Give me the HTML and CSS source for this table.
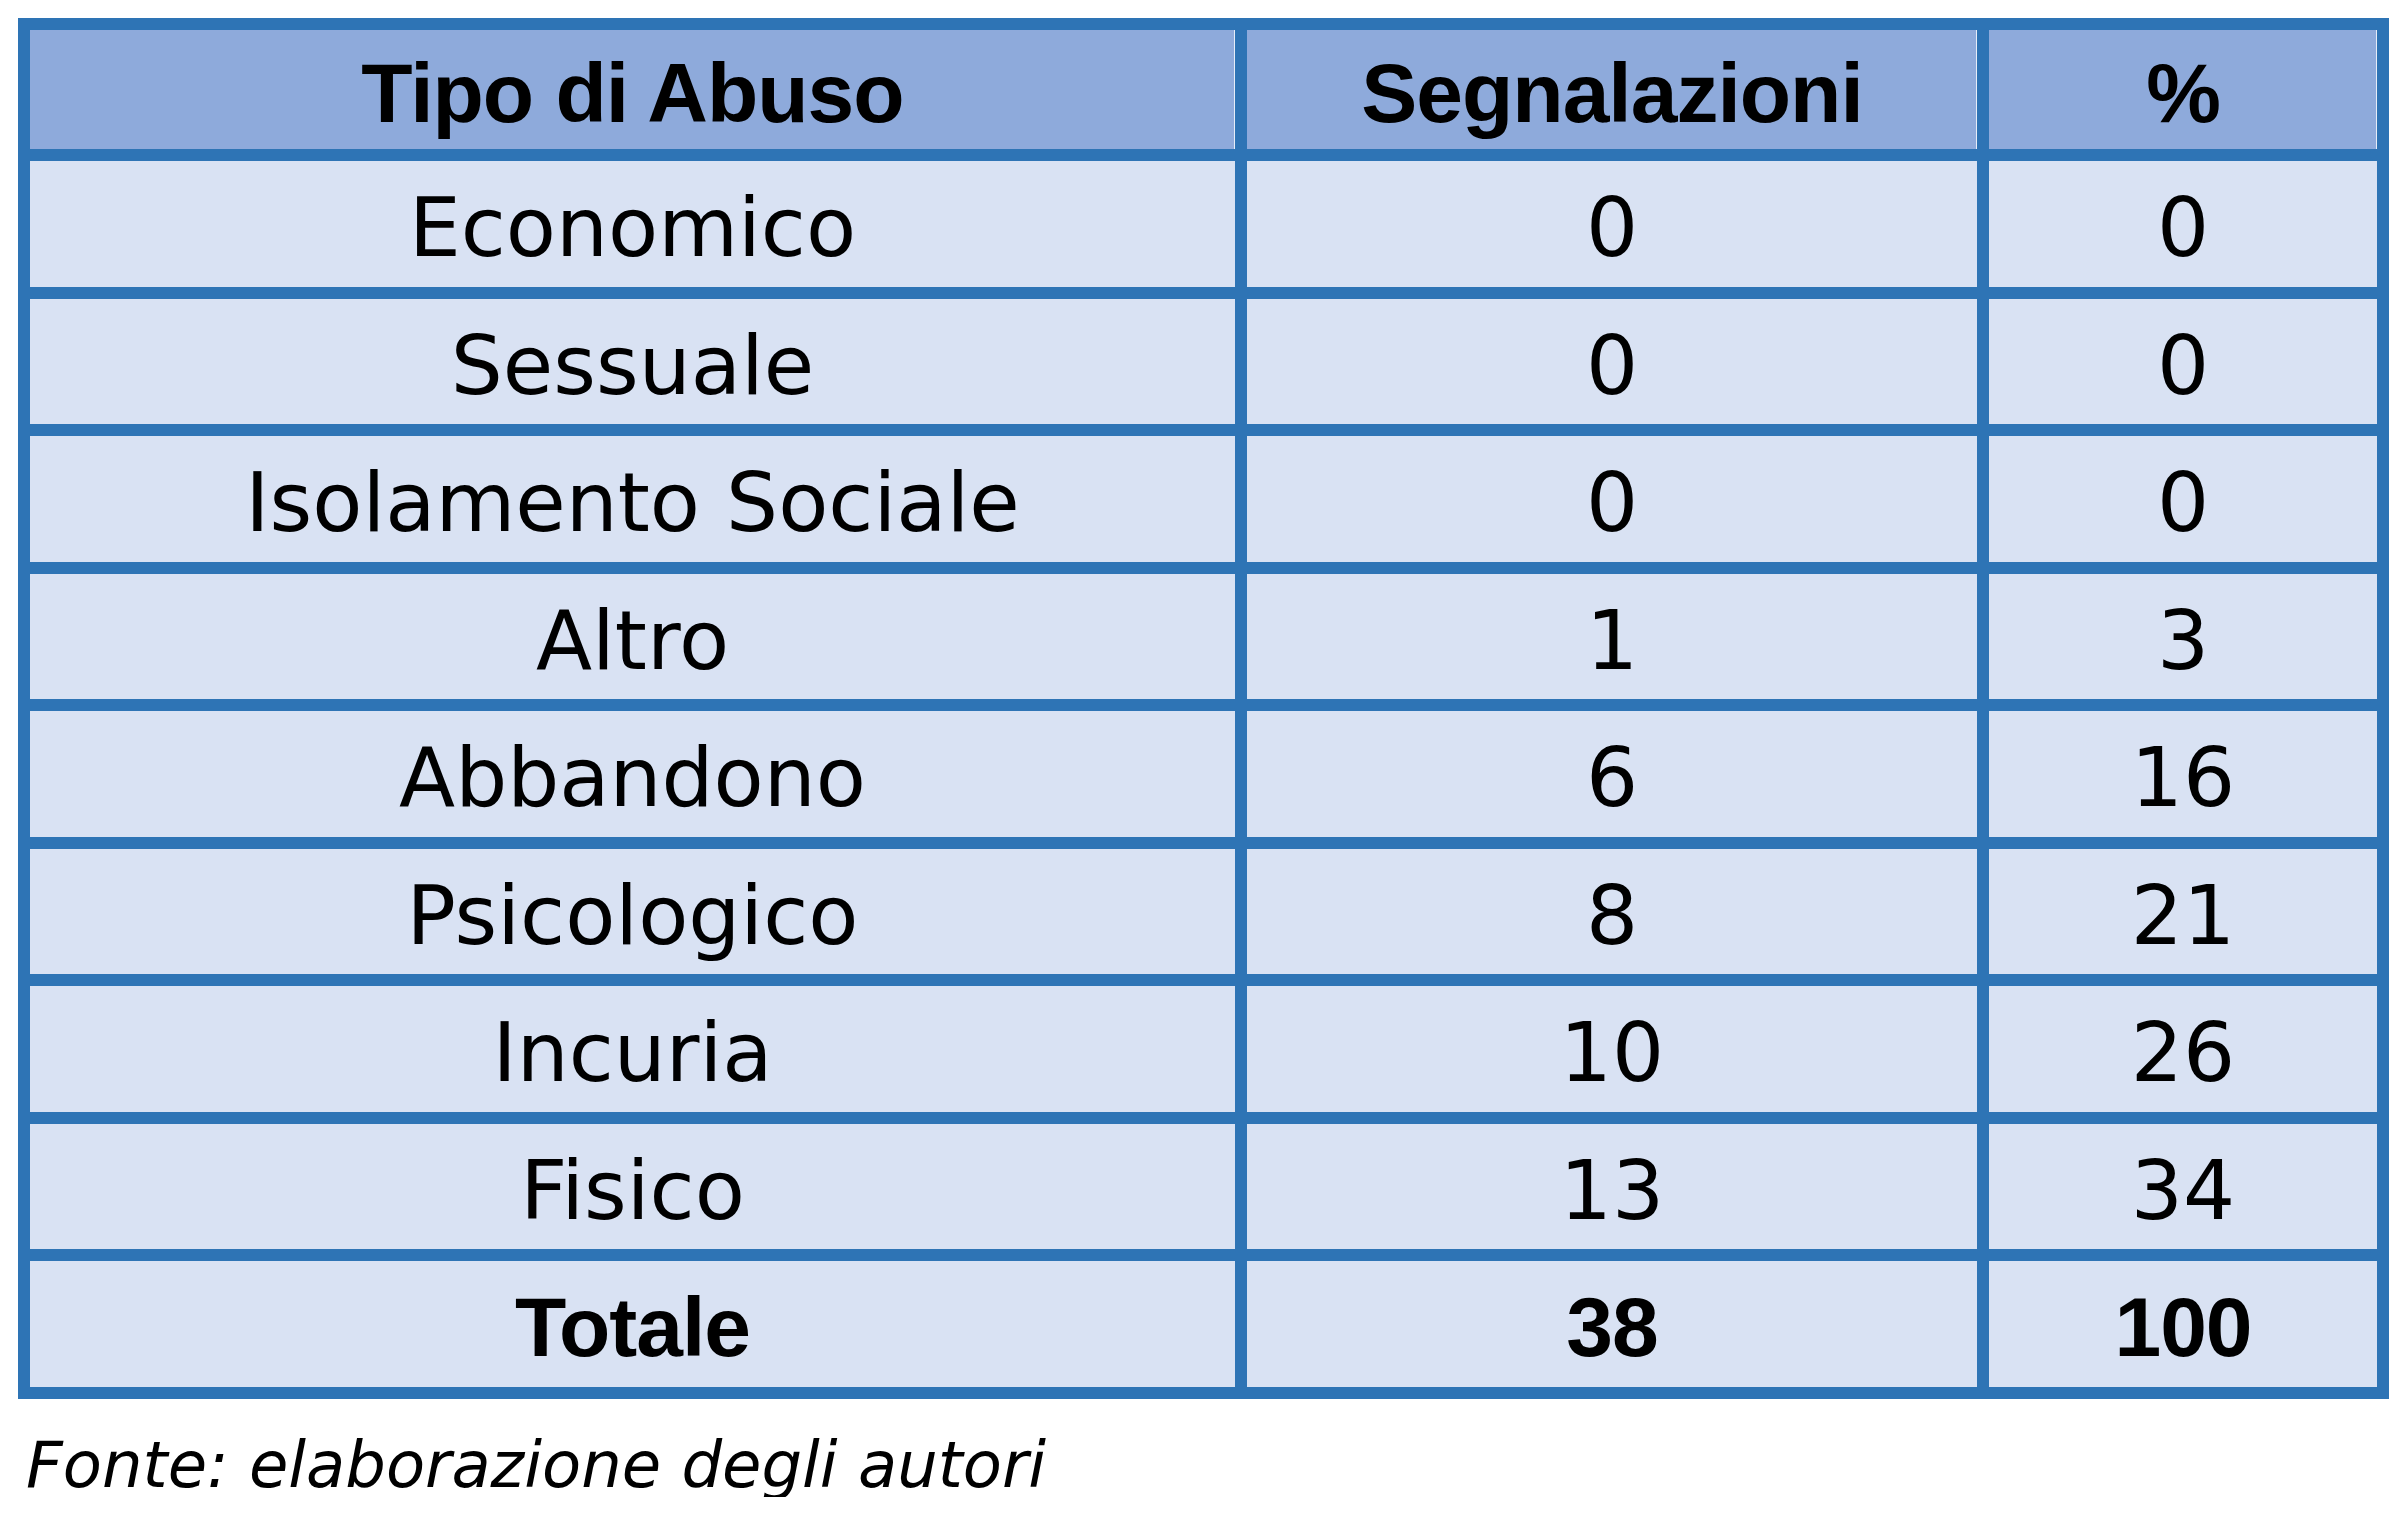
FILE: index.html
```html
<!DOCTYPE html>
<html lang="it">
<head>
<meta charset="utf-8">
<title>Tipo di Abuso</title>
<link rel="stylesheet" href="styles.css">
</head>
<body>
<div class="table">
  <div class="cell head">Tipo di Abuso</div>
  <div class="cell head">Segnalazioni</div>
  <div class="cell head">%</div>

  <div class="cell">Economico</div>
  <div class="cell">0</div>
  <div class="cell">0</div>

  <div class="cell">Sessuale</div>
  <div class="cell">0</div>
  <div class="cell">0</div>

  <div class="cell">Isolamento Sociale</div>
  <div class="cell">0</div>
  <div class="cell">0</div>

  <div class="cell">Altro</div>
  <div class="cell">1</div>
  <div class="cell">3</div>

  <div class="cell">Abbandono</div>
  <div class="cell">6</div>
  <div class="cell">16</div>

  <div class="cell">Psicologico</div>
  <div class="cell">8</div>
  <div class="cell">21</div>

  <div class="cell">Incuria</div>
  <div class="cell">10</div>
  <div class="cell">26</div>

  <div class="cell">Fisico</div>
  <div class="cell">13</div>
  <div class="cell">34</div>

  <div class="cell total">Totale</div>
  <div class="cell total">38</div>
  <div class="cell total">100</div>
</div>
<p class="source">Fonte: elaborazione degli autori</p>
</body>
</html>
```
FILE: styles.css
```css
html, body {
  margin: 0;
  padding: 0;
  background: #ffffff;
}

.table {
  display: grid;
  grid-template-columns: 1205px 730px 388px;
  grid-template-rows: 119px 126px 125px 126px 125px 126px 125px 126px 125px 126px;
  gap: 12px;
  padding: 12px;
  margin: 18px 0 0 18px;
  width: max-content;
  background: #2E74B5;
}

.cell {
  display: flex;
  align-items: center;
  justify-content: center;
  background: #D9E2F3;
  color: #000;
  font-family: "DejaVu Sans", "Liberation Sans", sans-serif;
  font-size: 82px;
  line-height: 1;
  padding-top: 8px;
  box-sizing: border-box;
  white-space: nowrap;
}

.head {
  background: #8EAADB;
  box-shadow: inset -1px 0 0 #e6edf8;
  font-family: "Liberation Sans", Arial, sans-serif;
  font-weight: 700;
  font-size: 84px;
  letter-spacing: -1px;
  padding-top: 6px;
}

.total {
  font-family: "Liberation Sans", Arial, sans-serif;
  font-weight: 700;
  font-size: 84px;
  letter-spacing: -1px;
  padding-top: 6px;
}

.source {
  margin: 34px 0 0 26px;
  font-family: "DejaVu Sans", "Liberation Sans", sans-serif;
  font-style: italic;
  font-size: 64px;
  line-height: 1;
  color: #000;
}
```
